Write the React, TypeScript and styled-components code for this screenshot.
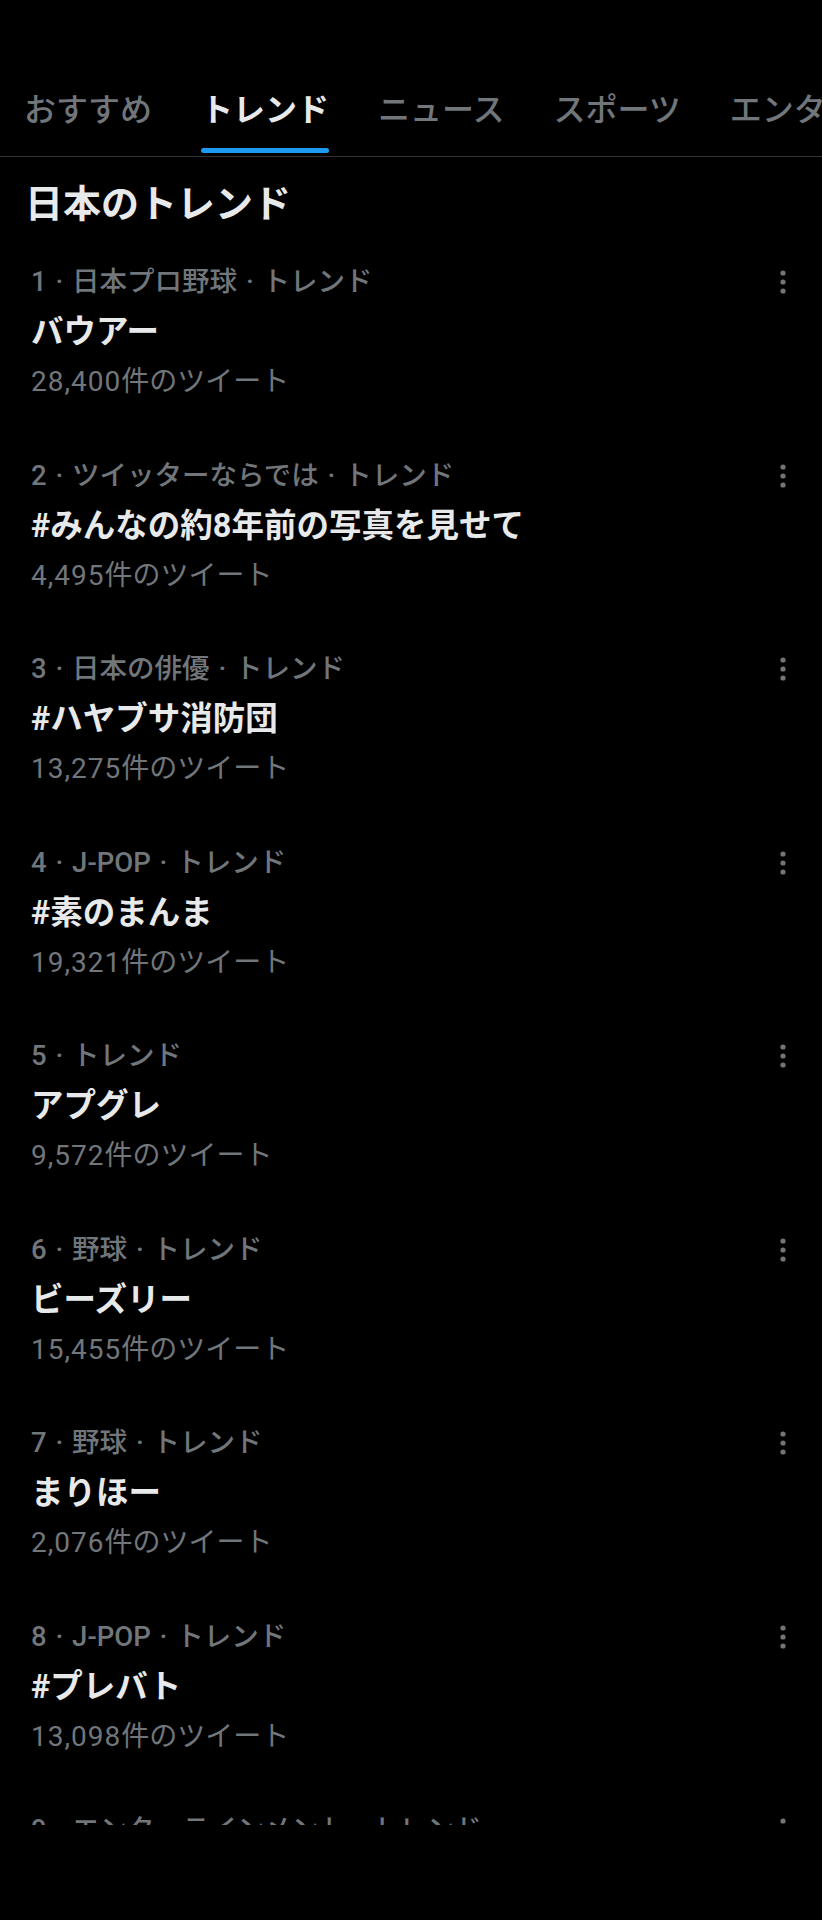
import React from "react";
import styled, { createGlobalStyle } from "styled-components";

const GlobalStyle = createGlobalStyle`
  html, body {
    margin: 0;
    padding: 0;
    background: #000;
  }
  body {
    font-family: Roboto, "Noto Sans CJK JP", sans-serif;
    color: #e7e9ea;
  }
`;

const Page = styled.div`
  width: 822px;
  height: 1825px;
  overflow: hidden;
  background: #000;
`;

const TabBar = styled.nav`
  display: flex;
  align-items: flex-end;
  gap: 49px;
  height: 156px;
  padding-left: 24px;
  border-bottom: 1px solid #2f3336;
  overflow: hidden;
  white-space: nowrap;
`;

const Tab = styled.div`
  display: flex;
  flex-direction: column;
  flex-shrink: 0;
`;

const TabLabel = styled.span<{ $active?: boolean }>`
  font-size: 32px;
  line-height: 48px;
  font-weight: ${(p) => (p.$active ? 700 : 500)};
  color: ${(p) => (p.$active ? "#e7e9ea" : "#71767b")};
`;

const Indicator = styled.div<{ $active?: boolean }>`
  height: 5px;
  margin: 14px 0 3px;
  border-radius: 3px;
  background: ${(p) => (p.$active ? "#1d9bf0" : "transparent")};
`;

const Heading = styled.h2`
  margin: 0;
  padding: 26px 25px 0;
  font-size: 38px;
  line-height: 42px;
  font-weight: 700;
  color: #e7e9ea;
`;

const Item = styled.div`
  position: relative;
  display: flex;
  flex-direction: column;
  padding: 32px 31px 11.5px;
`;

const Meta = styled.div`
  font-size: 27.5px;
  line-height: 50px;
  font-weight: 500;
  word-spacing: 2px;
  color: #71767b;
`;

const Title = styled.div`
  font-size: 32.5px;
  line-height: 50px;
  font-weight: 700;
  color: #e7e9ea;
`;

const Count = styled.div`
  font-size: 28px;
  line-height: 50px;
  font-weight: 400;
  color: #71767b;
`;

const Num = styled.span`
  letter-spacing: 1px;
`;

const MoreButton = styled.div`
  position: absolute;
  top: 32px;
  right: 31px;
  width: 16px;
  height: 50px;
  display: flex;
  align-items: center;
  justify-content: center;
  color: #71767b;
`;

const tabs = ["おすすめ", "トレンド", "ニュース", "スポーツ", "エンターテインメント"];

const trends = [
  { cat: "日本プロ野球", title: "バウアー", count: "28,400" },
  { cat: "ツイッターならでは", title: "#みんなの約8年前の写真を見せて", count: "4,495" },
  { cat: "日本の俳優", title: "#ハヤブサ消防団", count: "13,275" },
  { cat: "J-POP", title: "#素のまんま", count: "19,321" },
  { cat: "", title: "アプグレ", count: "9,572" },
  { cat: "野球", title: "ビーズリー", count: "15,455" },
  { cat: "野球", title: "まりほー", count: "2,076" },
  { cat: "J-POP", title: "#プレバト", count: "13,098" },
  { cat: "エンターテインメント", title: "#ハヤブサ消防団", count: "10,000" },
];

function Dots() {
  return (
    <svg width="6" height="24" viewBox="0 0 6 24" fill="currentColor">
      <circle cx="3" cy="3" r="2.6" />
      <circle cx="3" cy="12" r="2.6" />
      <circle cx="3" cy="21" r="2.6" />
    </svg>
  );
}

export default function App() {
  return (
    <Page>
      <GlobalStyle />
      <TabBar>
        {tabs.map((t) => (
          <Tab key={t}>
            <TabLabel $active={t === "トレンド"}>{t}</TabLabel>
            <Indicator $active={t === "トレンド"} />
          </Tab>
        ))}
      </TabBar>
      <Heading>日本のトレンド</Heading>
      {trends.map((t, i) => (
        <Item key={i}>
          <Meta>
            {i + 1} · {t.cat ? `${t.cat} · ` : ""}トレンド
          </Meta>
          <Title>{t.title}</Title>
          <Count>
            <Num>{t.count}</Num>件のツイート
          </Count>
          <MoreButton>
            <Dots />
          </MoreButton>
        </Item>
      ))}
    </Page>
  );
}
